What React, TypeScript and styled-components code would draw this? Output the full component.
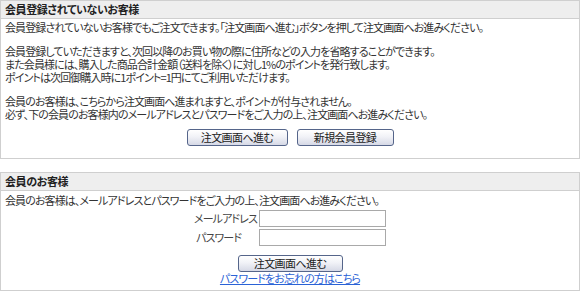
import React from 'react';
import styled, { createGlobalStyle } from 'styled-components';

const GlobalStyle = createGlobalStyle`
  body {
    margin: 0;
    background: #ffffff;
    font-family: "Noto Sans CJK JP", "Liberation Sans", sans-serif;
    font-feature-settings: "palt";
    font-size: 11px;
    letter-spacing: -0.9px;
    color: #333333;
  }
`;

const Page = styled.div`
  width: 580px;
  display: flex;
  flex-direction: column;
  gap: 13px;
`;

const Panel = styled.section`
  border: 1px solid #cfcfcf;
`;

const PanelHeading = styled.h2`
  margin: 0;
  height: 17px;
  line-height: 17px;
  padding-left: 4px;
  background: #eeeeee;
  border-bottom: 1px solid #cfcfcf;
  font-size: 11px;
  font-weight: 700;
  letter-spacing: -0.4px;
  color: #222222;
`;

const PanelBody = styled.div<{ $pad: string }>`
  padding: ${p => p.$pad};
  line-height: 13px;
`;

const Para = styled.p<{ $last?: boolean }>`
  margin: 0 0 ${p => (p.$last ? '8px' : '11px')};
`;

const ButtonRow = styled.div`
  display: flex;
  justify-content: center;
  gap: 9px;
`;

const Button = styled.button<{ $w: number }>`
  width: ${p => p.$w}px;
  height: 17px;
  padding: 0;
  border: 1px solid #55658a;
  border-radius: 3px;
  background: linear-gradient(#ffffff, #f1f2f7 45%, #d6d9e6);
  font-family: inherit;
  font-feature-settings: "palt";
  font-size: 11px;
  letter-spacing: -0.6px;
  line-height: 15px;
  color: #222222;
`;

const FormTable = styled.div`
  display: grid;
  grid-template-columns: 62px 127px;
  column-gap: 3px;
  row-gap: 2px;
  align-items: center;
  justify-content: center;
  margin: 3px 0 9px;
`;

const Label = styled.label<{ $right?: boolean }>`
  white-space: nowrap;
  text-align: ${p => (p.$right ? 'right' : 'left')};
  padding-left: ${p => (p.$right ? '0' : '2px')};
  color: #444444;
`;

const Field = styled.input`
  box-sizing: border-box;
  width: 127px;
  height: 17px;
  margin: 0;
  border: 1px solid #a9a9a9;
  padding: 0 2px;
  font-size: 11px;
`;

const Center = styled.div`
  display: flex;
  flex-direction: column;
  align-items: center;
`;

const Link = styled.a`
  color: #2a62d6;
  text-decoration: underline;
  line-height: 12px;
`;

export default function App() {
  return (
    <>
      <GlobalStyle />
      <Page>
        <Panel>
          <PanelHeading>会員登録されていないお客様</PanelHeading>
          <PanelBody $pad="2px 4px 12px">
            <Para>会員登録されていないお客様でもご注文できます。「注文画面へ進む」ボタンを押して注文画面へお進みください。</Para>
            <Para>
              会員登録していただきますと、次回以降のお買い物の際に住所などの入力を省略することができます。
              <br />
              また会員様には、購入した商品合計金額（送料を除く）に対し1%のポイントを発行致します。
              <br />
              ポイントは次回御購入時に1ポイント=1円にてご利用いただけます。
            </Para>
            <Para $last>
              会員のお客様は、こちらから注文画面へ進まれますと、ポイントが付与されません。
              <br />
              必ず、下の会員のお客様内のメールアドレスとパスワードをご入力の上、注文画面へお進みください。
            </Para>
            <ButtonRow>
              <Button $w={101}>注文画面へ進む</Button>
              <Button $w={97}>新規会員登録</Button>
            </ButtonRow>
          </PanelBody>
        </Panel>
        <Panel>
          <PanelHeading>会員のお客様</PanelHeading>
          <PanelBody $pad="3px 4px 6px">
            <div>会員のお客様は、メールアドレスとパスワードをご入力の上、注文画面へお進みください。</div>
            <FormTable>
              <Label $right>メールアドレス</Label>
              <Field type="text" />
              <Label>パスワード</Label>
              <Field type="password" />
            </FormTable>
            <Center>
              <Button $w={105}>注文画面へ進む</Button>
              <Link href="#">パスワードをお忘れの方はこちら</Link>
            </Center>
          </PanelBody>
        </Panel>
      </Page>
    </>
  );
}
